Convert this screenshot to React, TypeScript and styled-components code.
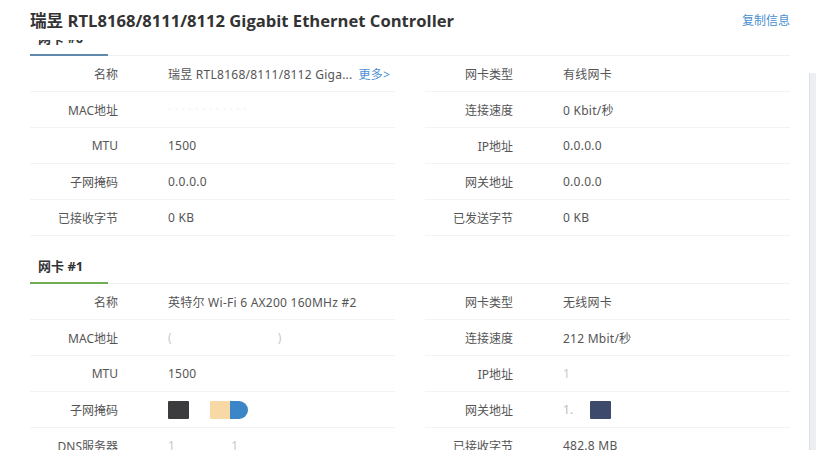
import React from 'react';
import styled, { createGlobalStyle } from 'styled-components';

const GlobalStyle = createGlobalStyle`
  html, body {
    margin: 0;
    padding: 0;
    background: #fff;
  }
  body {
    font-family: "Noto Sans", "Noto Sans CJK SC", sans-serif;
    color: #555;
  }
`;

const Page = styled.div`
  position: relative;
  width: 820px;
  height: 450px;
  overflow: hidden;
  background: #fff;
  display: flex;
  flex-direction: column;
`;

const TopBar = styled.div`
  position: relative;
  z-index: 2;
  height: 40px;
  flex: none;
  display: flex;
  align-items: center;
  justify-content: space-between;
  padding: 0 30px;
  background: #fff;
`;

const Title = styled.h1`
  margin: 0;
  font-size: 16.6px;
  font-weight: 700;
  color: #333;
  font-family: "Open Sans", "Noto Sans CJK SC", sans-serif;
`;

const CopyLink = styled.a`
  font-size: 12px;
  color: #4a8fd0;
  cursor: pointer;
`;

const Viewport = styled.div`
  flex: 1;
  overflow: hidden;
`;

// simulates the scrolled position of the list
const Scroller = styled.div`
  margin-top: -31px;
  padding: 0 30px;
`;

const Section = styled.section`
  & + & {
    margin-top: 1px;
  }
`;

const SectionHead = styled.div<{ $accent: string }>`
  position: relative;
  height: 47px;
  padding-top: 20px;
  box-sizing: border-box;
  border-bottom: 1px solid #f0f0f0;
  font-size: 13px;
  font-weight: 700;
  color: #333;
  line-height: 18px;
  &::after {
    content: '';
    position: absolute;
    left: 0;
    bottom: -1px;
    width: 78px;
    height: 2px;
    background: ${p => p.$accent};
  }
`;

const SectionTitle = styled.span`
  padding-left: 8px;
`;

const Grid = styled.div`
  display: grid;
  grid-template-columns: 1fr 1fr;
  column-gap: 30px;
`;

const Row = styled.div`
  display: flex;
  align-items: center;
  height: 36px;
  box-sizing: border-box;
  border-bottom: 1px solid #f3f3f3;
  font-size: 12px;
`;

const Label = styled.div`
  width: 88px;
  flex: none;
  text-align: right;
  color: #555;
`;

const Value = styled.div<{ $faint?: boolean }>`
  margin-left: 50px;
  display: flex;
  align-items: center;
  letter-spacing: 0.25px;
  color: ${p => (p.$faint ? '#c8c8c8' : '#555')};
  white-space: nowrap;
`;

const More = styled.a`
  margin-left: 6px;
  color: #4a8fd6;
  cursor: pointer;
`;

const Blot = styled.span<{ $c: string; $w: number; $round?: boolean }>`
  display: inline-block;
  width: ${p => p.$w}px;
  height: 18px;
  background: ${p => p.$c};
  border-radius: ${p => (p.$round ? '0 9px 9px 0' : '1px')};
  filter: blur(0.6px);
`;

const Gap = styled.span<{ $w: number }>`
  display: inline-block;
  width: ${p => p.$w}px;
`;

const ScrollThumb = styled.div`
  position: absolute;
  right: 4px;
  top: 73px;
  bottom: 0;
  width: 6px;
  background: #eceef1;
  border-left: 1px solid #dde1e6;
`;

type Cell = [string, React.ReactNode, boolean?];

const card0: Cell[][] = [
  [
    ['名称', <>瑞昱 RTL8168/8111/8112 Giga... <More>更多&gt;</More></>],
    ['网卡类型', '有线网卡'],
  ],
  [
    ['MAC地址', <span style={{ color: '#f2f2f2' }}>· · · · · · · · · · · ·</span>],
    ['连接速度', '0 Kbit/秒'],
  ],
  [
    ['MTU', '1500'],
    ['IP地址', '0.0.0.0'],
  ],
  [
    ['子网掩码', '0.0.0.0'],
    ['网关地址', '0.0.0.0'],
  ],
  [
    ['已接收字节', '0 KB'],
    ['已发送字节', '0 KB'],
  ],
];

const card1: Cell[][] = [
  [
    ['名称', '英特尔 Wi-Fi 6 AX200 160MHz #2'],
    ['网卡类型', '无线网卡'],
  ],
  [
    ['MAC地址', <>(<Gap $w={106} />)</>, true],
    ['连接速度', '212 Mbit/秒'],
  ],
  [
    ['MTU', '1500'],
    ['IP地址', '1', true],
  ],
  [
    [
      '子网掩码',
      <>
        <Blot $c="#3c3c3e" $w={21} />
        <Gap $w={21} />
        <Blot $c="#f8d9a6" $w={20} />
        <Blot $c="#3b86c6" $w={18} $round />
      </>,
    ],
    [
      '网关地址',
      <>
        <span style={{ color: '#bbb' }}>1.</span>
        <Gap $w={16} />
        <Blot $c="#3d4a6c" $w={21} />
      </>,
    ],
  ],
  [
    ['DNS服务器', <>1<Gap $w={56} />1</>, true],
    ['已接收字节', '482.8 MB'],
  ],
];

function Card({ title, accent, rows }: { title: string; accent: string; rows: Cell[][] }) {
  return (
    <Section>
      <SectionHead $accent={accent}>
        <SectionTitle>{title}</SectionTitle>
      </SectionHead>
      <Grid>
        {rows.map((pair, i) =>
          pair.map(([label, value, faint], j) => (
            <Row key={`${i}-${j}`}>
              <Label>{label}</Label>
              <Value $faint={faint}>{value}</Value>
            </Row>
          ))
        )}
      </Grid>
    </Section>
  );
}

export default function App() {
  return (
    <>
      <GlobalStyle />
      <Page>
        <TopBar>
          <Title>瑞昱 RTL8168/8111/8112 Gigabit Ethernet Controller</Title>
          <CopyLink>复制信息</CopyLink>
        </TopBar>
        <Viewport>
          <Scroller>
            <Card title="网卡 #0" accent="#6189ad" rows={card0} />
            <Card title="网卡 #1" accent="#6fae55" rows={card1} />
          </Scroller>
        </Viewport>
        <ScrollThumb />
      </Page>
    </>
  );
}
